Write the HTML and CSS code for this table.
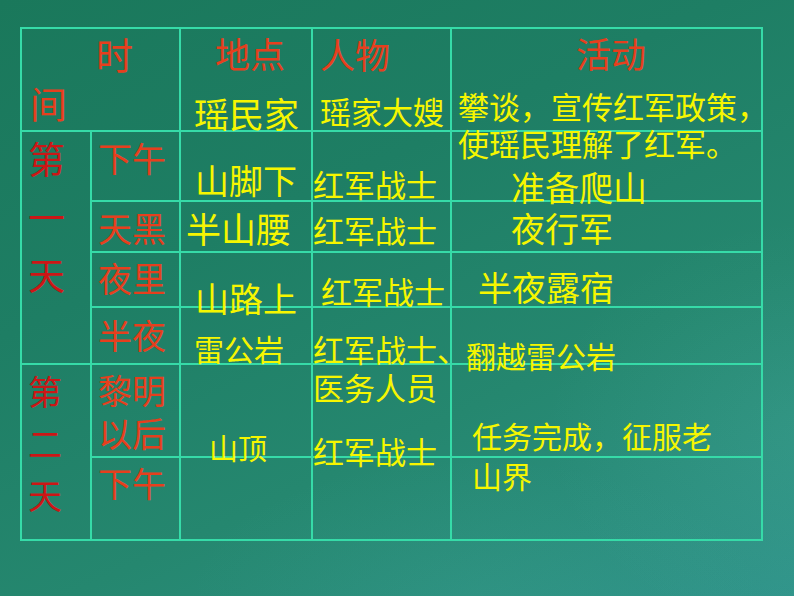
FILE: index.html
```html
<!DOCTYPE html>
<html lang="zh">
<head>
<meta charset="utf-8">
<title>红军过老山界</title>
<link rel="stylesheet" href="styles.css">
</head>
<body>
<div class="slide">
  <div class="board">
    <!-- row 1 -->
    <div class="cell span-c2 hd-time">
      <div class="red s37 shi">时</div>
      <div class="red s37 jian">间</div>
    </div>
    <div class="cell">
      <div class="red s35 ttl-place">地点</div>
      <div class="yel s35 place0">瑶民家</div>
    </div>
    <div class="cell">
      <div class="red s35 ttl-person">人物</div>
      <div class="yel s31 person0">瑶家大嫂</div>
    </div>
    <div class="cell">
      <div class="red s35 ttl-act">活动</div>
      <div class="yel s31 act0">攀谈，宣传红军政策，<br>使瑶民理解了红军。</div>
    </div>

    <!-- row 2 -->
    <div class="cell span-r4">
      <div class="dred day1">第<br>一<br>天</div>
    </div>
    <div class="cell"><div class="red s34 tm">下午</div></div>
    <div class="cell"><div class="yel s34 pl-r2">山脚下</div></div>
    <div class="cell"><div class="yel s31 pe-r2">红军战士</div></div>
    <div class="cell"><div class="yel s34 ac-r2">准备爬山</div></div>

    <!-- row 3 -->
    <div class="cell"><div class="red s34 tm">天黑</div></div>
    <div class="cell"><div class="yel s35 pl-r3">半山腰</div></div>
    <div class="cell"><div class="yel s31 pe-r3">红军战士</div></div>
    <div class="cell"><div class="yel s34 ac-r3">夜行军</div></div>

    <!-- row 4 -->
    <div class="cell"><div class="red s34 tm tm-r4">夜里</div></div>
    <div class="cell"><div class="yel s34 pl-r4">山路上</div></div>
    <div class="cell"><div class="yel s31 pe-r4">红军战士</div></div>
    <div class="cell"><div class="yel s34 ac-r4">半夜露宿</div></div>

    <!-- row 5 -->
    <div class="cell"><div class="red s34 tm tm-r5">半夜</div></div>
    <div class="cell"><div class="yel s30 pl-r5">雷公岩</div></div>
    <div class="cell"><div class="yel s31 pe-r5">红军战士、<br>医务人员</div></div>
    <div class="cell"><div class="yel s30 ac-r5">翻越雷公岩</div></div>

    <!-- row 6 -->
    <div class="cell span-r2">
      <div class="dred day2">第<br>二<br>天</div>
    </div>
    <div class="cell"><div class="red s34 tm-r6">黎明<br>以后</div></div>
    <div class="cell"><div class="yel s29 pl-r6">山顶</div></div>
    <div class="cell"><div class="yel s31 pe-r6">红军战士</div></div>
    <div class="cell"><div class="yel s30 ac-r6">任务完成，征服老<br>山界</div></div>

    <!-- row 7 -->
    <div class="cell"><div class="red s34 tm tm-r7">下午</div></div>
    <div class="cell"></div>
    <div class="cell"></div>
    <div class="cell"></div>
  </div>
</div>
</body>
</html>
```

FILE: styles.css
```css
html, body {
  margin: 0;
  padding: 0;
}

body {
  width: 794px;
  height: 596px;
  overflow: hidden;
  font-family: "Noto Sans CJK SC", "Noto Sans", sans-serif;
}

.slide {
  width: 794px;
  height: 596px;
  box-sizing: border-box;
  padding: 27px 0 0 20px;
  background:
    radial-gradient(ellipse 380px 300px at 102% 72%, rgba(120, 220, 200, 0.10), rgba(120, 220, 200, 0) 70%),
    radial-gradient(ellipse 420px 200px at 60% 100%, rgba(90, 200, 180, 0.08), rgba(90, 200, 180, 0) 70%),
    linear-gradient(155deg, #1a785b 0%, #1e7e64 35%, #25876f 65%, #30948a 100%);
}

.board {
  display: grid;
  width: max-content;
  grid-template-columns: 70px 89px 132px 139px 311px;
  grid-template-rows: 103px 70px 51px 55px 57px 93px 83px;
  border-top: 2px solid #36dba8;
  border-left: 2px solid #36dba8;
}

.cell {
  box-sizing: border-box;
  border-right: 2px solid #36dba8;
  border-bottom: 2px solid #36dba8;
  white-space: nowrap;
  overflow: visible;
  min-width: 0;
  min-height: 0;
}

.span-c2 { grid-column: span 2; }
.span-r4 { grid-row: span 4; }
.span-r2 { grid-row: span 2; }

/* colours */
.red  { color: #e63f1d; }
.dred { color: #cc1616; }
.yel  { color: #f6f600; }

/* sizes */
.s37 { font-size: 37px; line-height: 37px; }
.s35 { font-size: 35px; line-height: 35px; }
.s34 { font-size: 34px; line-height: 34px; }
.s31 { font-size: 31px; line-height: 31px; }
.s30 { font-size: 30px; line-height: 30px; }
.s29 { font-size: 29px; line-height: 29px; }

/* header row */
.shi  { margin: 7px 0 0 74px; }
.jian { margin: 12px 0 0 8px; }

.ttl-place { margin: 6px 0 0 34px; }
.place0    { margin: 25px 0 0 13px; }

.ttl-person { margin: 7px 0 0 7px; }
.person0    { margin: 24px 0 0 7px; }

.ttl-act { margin: 6px 0 0 124px; }
.act0    { margin: 17px 0 0 6px; line-height: 37px; }

/* day column */
.day1 {
  font-size: 37px;
  line-height: 58px;
  margin: -3px 0 0 6px;
}
.day2 {
  font-size: 34px;
  line-height: 52px;
  margin: 0 0 0 6px;
}

/* time column */
.tm    { margin: 9px 0 0 6px; }
.tm-r4 { margin-top: 8px; }
.tm-r5 { margin-top: 10px; }
.tm-r6 { margin: 3px 0 0 6px; line-height: 43px; }
.tm-r7 { margin-top: 8px; }

/* place column */
.pl-r2 { margin: 31px 0 0 14px; }
.pl-r3 { margin: 8px 0 0 5px; }
.pl-r4 { margin: 28px 0 0 14px; }
.pl-r5 { margin: 25px 0 0 13px; }
.pl-r6 { margin: 68px 0 0 28px; }

/* person column */
.pe-r2 { margin: 36px 0 0 0; }
.pe-r3 { margin: 12px 0 0 0; }
.pe-r4 { margin: 22px 0 0 8px; }
.pe-r5 { margin: 22px 0 0 0; line-height: 38px; }
.pe-r6 { margin: 70px 0 0 0; }

/* activity column */
.ac-r2 { margin: 38px 0 0 59px; }
.ac-r3 { margin: 9px 0 0 59px; }
.ac-r4 { margin: 17px 0 0 26px; }
.ac-r5 { margin: 32px 0 0 14px; }
.ac-r6 { margin: 50px 0 0 20px; line-height: 40px; }
```
